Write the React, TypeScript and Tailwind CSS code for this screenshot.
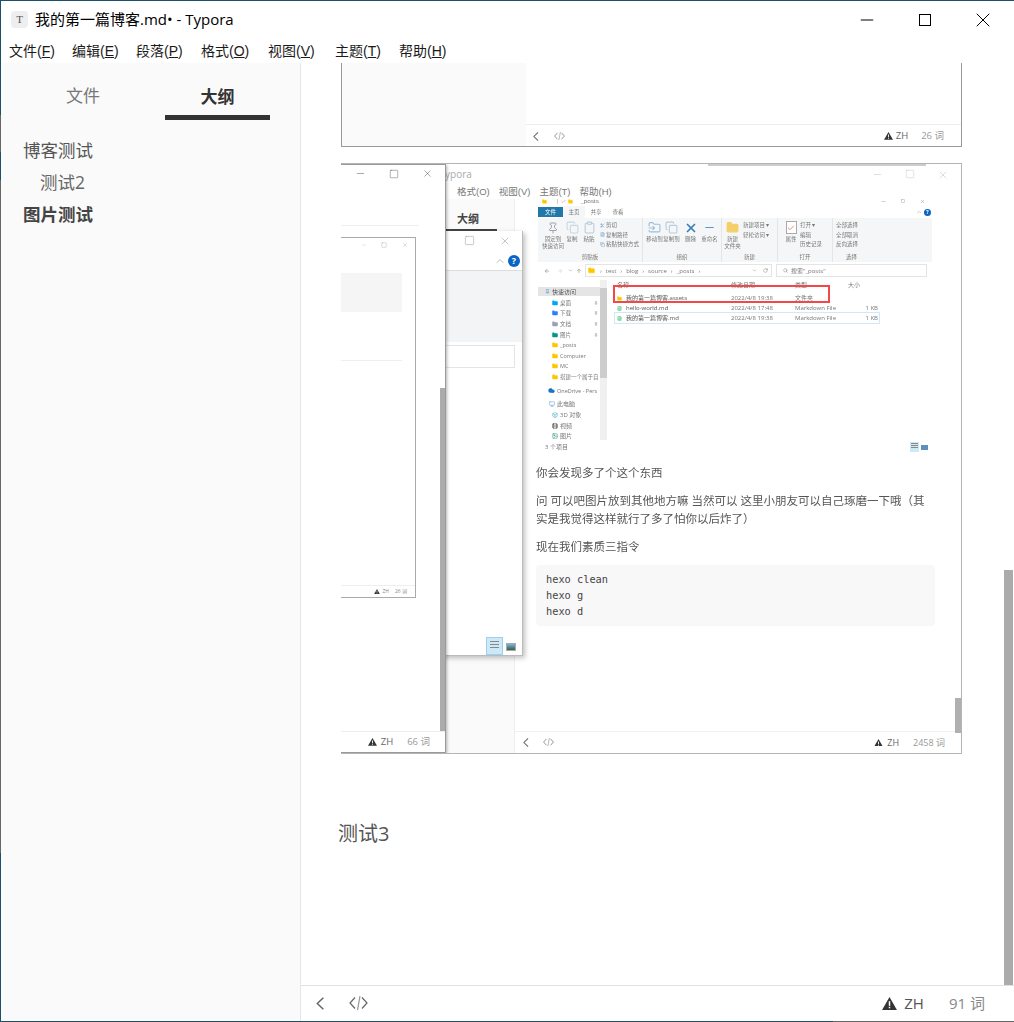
import React from 'react';
import { Minus, Square, X, ChevronUp, ChevronDown, ArrowLeft, ArrowRight, ArrowUp, RotateCw, Search, Pin, Folder, FileText, Check, Monitor, Image, Scissors, Copy, Cloud, FolderInput, Clipboard, Box, Film } from 'lucide-react';

const ui = "font-['Open_Sans','Noto_Sans_CJK_SC',sans-serif]";

const Warn = ({ w }: { w: number }) => (
  <svg width={w} height={w * 0.87} viewBox="0 0 16 14" className="shrink-0">
    <path d="M8 0 16 14H0Z" fill="#333" />
    <rect x="7.2" y="4.500" width="1.6" height="5" fill="#fff" />
    <rect x="7.2" y="10.500" width="1.6" height="1.6" fill="#fff" />
  </svg>
);

const Back = ({ h, color = '#666' }: { h: number; color?: string }) => (
  <svg width={h * 0.62} height={h} viewBox="0 0 8 13" fill="none" stroke={color} strokeWidth="1.5" className="shrink-0">
    <path d="M7.300 .7 1.300 6.500l6 5.800" />
  </svg>
);

const Code = ({ w, color = '#666' }: { w: number; color?: string }) => (
  <svg width={w} height={w * 0.74} viewBox="0 0 19 14" fill="none" stroke={color} strokeWidth="1.2" className="shrink-0">
    <path d="M6 1.500 1 7l5 5.500M13 1.500 18 7l-5 5.500" />
    <path d="M11 0 8.500 14" stroke="#999" />
  </svg>
);

const menus = [
  { label: '文件', key: 'F', w: 'w-[63px]' },
  { label: '编辑', key: 'E', w: 'w-[64px]' },
  { label: '段落', key: 'P', w: 'w-[65px]' },
  { label: '格式', key: 'O', w: 'w-[67px]' },
  { label: '视图', key: 'V', w: 'w-[67px]' },
  { label: '主题', key: 'T', w: 'w-[64px]' },
  { label: '帮助', key: 'H', w: 'w-[64px]' },
];

const navItems = [
  { label: '桌面', color: 'text-sky-500', pin: true },
  { label: '下载', color: 'text-blue-500', pin: true },
  { label: '文档', color: 'text-gray-400', pin: true },
  { label: '图片', color: 'text-teal-600', pin: true },
  { label: '_posts', color: 'text-yellow-400', pin: false },
  { label: 'Computer', color: 'text-yellow-400', pin: false },
  { label: 'MC', color: 'text-yellow-400', pin: false },
  { label: '搭建一个属于自', color: 'text-yellow-400', pin: false },
];

const files = [
  { name: '我的第一篇博客.assets', date: '2022/4/8 19:38', type: '文件夹', size: '', dir: true, selected: false },
  { name: 'hello-world.md', date: '2022/4/8 17:48', type: 'Markdown File', size: '1 KB', dir: false, selected: false },
  { name: '我的第一篇博客.md', date: '2022/4/8 19:38', type: 'Markdown File', size: '1 KB', dir: false, selected: true },
];

const Tool = ({ icon, lines, w }: { icon: React.ReactNode; lines: string[]; w: string }) => (
  <div className={`${w} flex flex-col items-center shrink-0`}>
    <div className="h-[15px] flex items-center">{icon}</div>
    {lines.map((l) => <span key={l} className="mt-[1px] whitespace-nowrap">{l}</span>)}
  </div>
);

function Explorer() {
  return (
    <div className="relative w-[394px] h-[256px] flex flex-col text-[6px] leading-[8px] text-[#777]">
      <div className="flex flex-col h-full blur-[0.4px]">
        <div className="flex items-center h-[10px] pl-[4px] shrink-0">
          <Folder size={5} className="text-yellow-400" fill="currentColor" />
          <span className="ml-[10px] w-px h-[5px] bg-[#ccc]" />
          <Check size={5} className="ml-[3px] text-[#c55]" />
          <Folder size={5} className="ml-[2px] text-yellow-400" fill="currentColor" />
          <span className="ml-[8px] text-[#666]">_posts</span>
          <div className="ml-auto flex gap-[15px] pr-[7px] text-[#888]">
            <Minus size={5} /><Square size={4} /><X size={5} />
          </div>
        </div>
        <div className="flex items-center h-[12px] shrink-0 text-[5.5px]">
          <span className="bg-[#1f78a8] text-white w-[25px] h-[10px] flex items-center justify-center">文件</span>
          <span className="bg-[#f5f6f7] w-[22px] h-[12px] flex items-center justify-center">主页</span>
          <span className="w-[22px] text-center">共享</span>
          <span className="w-[22px] text-center">查看</span>
          <div className="ml-auto flex items-center gap-[2px] pr-[1px]">
            <ChevronUp size={6} className="text-[#999]" />
            <span className="w-[7px] h-[7px] rounded-full bg-[#0a63c5] text-white text-[5px] leading-[7px] text-center font-bold">?</span>
          </div>
        </div>
        <div className="flex h-[44px] shrink-0 bg-[#f5f6f7] text-[5.5px] leading-[6px]">
          <div className="w-[105px] relative flex pl-[4px] pt-[2px] border-r border-[#e3e5e7]">
            <Tool w="w-[22px]" icon={<Pin size={12} className="text-[#9aa4ad]" />} lines={['固定到', '快速访问']} />
            <Tool w="w-[16px]" icon={<Copy size={13} className="text-[#c7d6e4]" />} lines={['复制']} />
            <Tool w="w-[18px]" icon={<Clipboard size={13} className="text-[#b9cbdc]" />} lines={['粘贴']} />
            <div className="flex flex-col gap-[3.500px] pt-[2px] pl-[2px] whitespace-nowrap">
              <span className="flex gap-[1px] items-center"><Scissors size={5} className="text-[#5e94c4]" />剪切</span>
              <span className="flex gap-[1px] items-center"><FileText size={5} className="text-[#5e94c4]" />复制路径</span>
              <span className="flex gap-[1px] items-center"><Copy size={5} className="text-[#5e94c4]" />粘贴快捷方式</span>
            </div>
            <span className="absolute bottom-[2px] inset-x-0 text-center">剪贴板</span>
          </div>
          <div className="w-[79px] relative flex pl-[3px] pt-[2px] border-r border-[#e3e5e7]">
            <Tool w="w-[17px]" icon={<FolderInput size={13} className="text-[#9dbddc]" />} lines={['移动到']} />
            <Tool w="w-[17px]" icon={<Copy size={13} className="text-[#b9cbdc]" />} lines={['复制到']} />
            <Tool w="w-[21px]" icon={<X size={14} strokeWidth={3} className="text-[#3c7fb8]" />} lines={['删除']} />
            <Tool w="w-[17px]" icon={<Minus size={13} className="text-[#5e94c4]" />} lines={['重命名']} />
            <span className="absolute bottom-[2px] inset-x-0 text-center">组织</span>
          </div>
          <div className="w-[56px] relative flex pt-[2px] border-r border-[#e3e5e7]">
            <Tool w="w-[21px]" icon={<Folder size={13} className="text-[#f4cf68]" fill="currentColor" />} lines={['新建', '文件夹']} />
            <div className="flex flex-col gap-[3.500px] pt-[2px] whitespace-nowrap"><span>新建项目 ▾</span><span>轻松访问 ▾</span></div>
            <span className="absolute bottom-[2px] inset-x-0 text-center">新建</span>
          </div>
          <div className="w-[55px] relative flex pl-[4px] pt-[2px] border-r border-[#e3e5e7]">
            <Tool w="w-[18px]" icon={<div className="w-[11px] h-[13px] border border-[#aaa] bg-white flex items-center justify-center"><Check size={8} className="text-[#e0562d]" /></div>} lines={['属性']} />
            <div className="flex flex-col gap-[3.500px] pt-[2px] whitespace-nowrap"><span>打开 ▾</span><span>编辑</span><span>历史记录</span></div>
            <span className="absolute bottom-[2px] inset-x-0 text-center">打开</span>
          </div>
          <div className="w-[37px] relative flex flex-col gap-[3.500px] pl-[3px] pt-[4px] whitespace-nowrap">
            <span>全部选择</span><span>全部取消</span><span>反向选择</span>
            <span className="absolute bottom-[2px] inset-x-0 text-center">选择</span>
          </div>
        </div>
        <div className="flex items-center h-[13px] mt-[2px] shrink-0 pl-[6px] pr-[5px]">
          <ArrowLeft size={6} />
          <ArrowRight size={6} className="ml-[7px] text-[#ccc]" />
          <ChevronDown size={5} className="ml-[5px]" />
          <ArrowUp size={6} className="ml-[3px]" />
          <div className="ml-[3px] flex-1 h-full border border-[#e4e4e4] flex items-center pl-[2px] pr-[3px]">
            <Folder size={7} className="text-yellow-400" fill="currentColor" />
            <span className="ml-[5px]">›</span><span className="ml-[4px]">test</span>
            <span className="ml-[4px]">›</span><span className="ml-[4px]">blog</span>
            <span className="ml-[4px]">›</span><span className="ml-[4px]">source</span>
            <span className="ml-[4px]">›</span><span className="ml-[4px]">_posts</span>
            <span className="ml-[4px]">›</span>
            <ChevronDown size={5} className="ml-auto" />
            <RotateCw size={5} className="ml-[6px]" />
          </div>
          <div className="w-[151px] ml-[4px] h-full border border-[#e4e4e4] flex items-center gap-[3px] pl-[6px]">
            <Search size={5} /><span>搜索"_posts"</span>
          </div>
        </div>
        <div className="flex h-[162px] mt-[3px] shrink-0">
          <div className="w-[62px] shrink-0 pt-[7px] flex flex-col gap-[2.650px]">
            <div className="bg-[#e5e5e5] h-[9px] pl-[7px] flex items-center gap-[2px] text-[#555] shrink-0">
              <Pin size={5} className="text-[#3c82c4]" />快速访问
            </div>
            {navItems.map((n) => (
              <div key={n.label} className="pl-[14px] h-[8px] flex items-center gap-[2px] whitespace-nowrap text-[5.500px] shrink-0">
                <Folder size={6} className={`${n.color} shrink-0`} fill="currentColor" />
                <span className="grow">{n.label}</span>
                {n.pin && <Pin size={4} className="mr-[2px]" />}
              </div>
            ))}
            <div className="pl-[10px] h-[8px] mt-[3px] flex items-center gap-[2px] whitespace-nowrap text-[5.500px] shrink-0"><Cloud size={7} className="text-[#1a74c7] shrink-0" fill="currentColor" />OneDrive - Pers</div>
            <div className="pl-[11px] h-[8px] mt-[3px] flex items-center gap-[2px] shrink-0"><Monitor size={6} className="text-[#5b9bd5]" />此电脑</div>
            <div className="pl-[14px] h-[8px] flex items-center gap-[2px] shrink-0"><Box size={6} className="text-[#2ba7c9]" />3D 对象</div>
            <div className="pl-[14px] h-[8px] flex items-center gap-[2px] shrink-0"><Film size={6} className="text-[#444]" />视频</div>
            <div className="pl-[14px] h-[8px] flex items-center gap-[2px] shrink-0"><Image size={6} className="text-[#2d8a7b]" />图片</div>
          </div>
          <div className="w-[7px] h-[160px] shrink-0 bg-[#f0f0f0] flex flex-col">
            <div className="bg-[#cdcdcd] h-[90px] mt-[8px]" />
          </div>
          <div className="w-[264px] ml-[8px]">
            <div className="flex h-[10px] items-center">
              <span className="w-[116px] pl-[2px]">名称</span>
              <span className="w-[64px]">修改日期</span>
              <span className="w-[53px]">类型</span>
              <span>大小</span>
            </div>
            <div className="mt-[3px]">
              {files.map((f) => (
                <div key={f.name} className={`flex h-[10px] items-center whitespace-nowrap ${f.selected ? 'outline outline-[#cfe8fa]' : ''}`}>
                  <span className="w-[116px] flex items-center gap-[4px] pl-[2px]">
                    {f.dir ? <Folder size={5} className="text-yellow-400" fill="currentColor" /> : <FileText size={5} className="text-green-600" />}
                    <span className="text-[#555]">{f.name}</span>
                  </span>
                  <span className="w-[64px]">{f.date}</span>
                  <span className="w-[53px]">{f.type}</span>
                  <span className="w-[31px] text-right pr-[1px]">{f.size}</span>
                </div>
              ))}
            </div>
          </div>
        </div>
        <div className="h-[10px] pl-[7px] pr-[4px] flex items-center">
          <span>3 个项目</span>
          <div className="ml-auto w-[9px] h-[10px] bg-[#cde8f7] flex flex-col gap-[1px] p-[1px]">
            <div className="h-px bg-[#888]" /><div className="h-px bg-[#888]" /><div className="h-px bg-[#888]" />
          </div>
          <div className="ml-[2px] w-[7px] h-[5px] bg-[#5f8fbd]" />
        </div>
      </div>
      <div className="absolute left-[75px] top-[89px] w-[217px] h-[18px] border-2 border-[#f44848]" />
    </div>
  );
}

function Shot() {
  return (
    <div className="relative w-[621px] h-[591px] mt-[16px] border-y border-r border-[#b4b4b4] bg-white overflow-hidden">
      {/* back window: the article */}
      <div className="absolute left-[174px] top-0 right-0 bottom-0 bg-white">
        <div className="absolute right-[12px] top-[5px] flex gap-[22px] text-[#bbb]"><Minus size={11} strokeWidth={1} /><Square size={10} strokeWidth={1} /><X size={12} strokeWidth={1} /></div>
        <div className="absolute left-[-71px] top-[35px] bottom-0 w-[71px] bg-[#fafafa] border-r border-[#eee]" />
        <div className="absolute left-[-70px] top-[3px] text-[10px] leading-[14px] text-[#aaa]">ypora</div>
        <div className="absolute left-[-58px] top-[21px] flex gap-[9px] text-[9.500px] leading-[14px] text-[#777] whitespace-nowrap font-['Liberation_Sans','Noto_Sans_CJK_SC',sans-serif]">
          <span>格式(O)</span><span>视图(V)</span><span>主题(T)</span><span>帮助(H)</span>
        </div>
        <div className="absolute left-[-58px] top-[47px] text-[11px] leading-[16px] font-bold text-[#444]">大纲</div>
        <div className="absolute left-[-70px] top-[65px] w-[52px] h-[2px] bg-[#444]" />
        <div className="absolute left-[23px] top-[32px]"><Explorer /></div>
        <div className="absolute left-[21px] top-[299px] w-[399px] text-[#555] text-[11.500px] leading-[18px]">
          <p className="blur-[0.3px] mt-[1px]">你会发现多了个这个东西</p>
          <p className="mt-[10px] blur-[0.3px] w-[392px]">问 可以吧图片放到其他地方嘛 当然可以 这里小朋友可以自己琢磨一下哦（其实是我觉得这样就行了多了怕你以后炸了）</p>
          <p className="mt-[10px] blur-[0.3px]">现在我们素质三指令</p>
          <pre className="mt-[9px] bg-[#f8f8f8] rounded-sm px-[10px] pt-[6px] font-['DejaVu_Sans_Mono',monospace] text-[10.300px] leading-[16px] h-[61px] text-[#444]">{'hexo clean\nhexo g\nhexo d'}</pre>
        </div>
        <div className="absolute left-0 right-0 bottom-0 h-[22px] border-t border-[#f0f0f0] flex items-center pl-[8px] pr-[16px] text-[9px] text-[#666] bg-white">
          <Back h={9} />
          <div className="ml-[14px]"><Code w={11} /></div>
          <div className="ml-auto flex items-center">
            <Warn w={9} /><span className="ml-[4px]">ZH</span><span className="ml-[14px] text-[#999]">2458 词</span>
          </div>
        </div>
        <div className="absolute right-0 top-[534px] w-[6px] h-[35px] bg-[#b0b0b0]" />
      </div>
      {/* window floating over the article */}
      <div className="absolute left-0 top-[67px] w-[182px] h-[425px] bg-white border-b border-r border-[#bbb] shadow-[2px_2px_5px_rgba(0,0,0,0.25)]">
        <Square size={11} strokeWidth={1} className="absolute right-[47px] top-[4px] text-[#888]" />
        <X size={12} strokeWidth={1} className="absolute right-[11px] top-[4px] text-[#888]" />
        <ChevronUp size={12} className="absolute right-[16px] top-[24px] text-[#bbb]" />
        <div className="absolute right-[2px] top-[24px] w-[12px] h-[12px] rounded-full bg-[#0a63c5] text-white text-[9px] leading-[12px] text-center font-bold">?</div>
        <div className="absolute inset-x-0 top-[39px] h-[72px] bg-[#f3f4f5] border-t border-[#ddd]" />
        <div className="absolute left-0 right-[7px] top-[114px] h-[23px] border border-[#e4e4e4]" />
        <div className="absolute right-[19px] bottom-0 w-[17px] h-[18px] bg-[#cde8f7] border border-[#99d1ef] flex flex-col gap-[2px] p-[3px]">
          <div className="h-px bg-[#888]" /><div className="h-px bg-[#888]" /><div className="h-px bg-[#888]" />
        </div>
        <div className="absolute right-[6px] bottom-[4px] w-[10px] h-[8px] bg-gradient-to-b from-[#7fb3e0] to-[#35604a] border border-[#aaa]" />
      </div>
      {/* front window */}
      <div className="absolute left-0 top-0 w-[105px] h-[589px] bg-white border-t border-r border-b border-[#9a9a9a] shadow-[1px_1px_3px_rgba(0,0,0,0.3)]">
        <Minus size={11} strokeWidth={1} className="absolute left-[14px] top-[3px] text-[#444]" />
        <Square size={10} strokeWidth={1} className="absolute left-[48px] top-[4px] text-[#444]" />
        <X size={11} strokeWidth={1} className="absolute left-[81px] top-[3px] text-[#444]" />
        <div className="absolute left-0 right-[26px] top-[60px] h-px bg-[#eee]" />
        <div className="absolute left-0 top-[72px] w-[75px] h-[361px] border-t border-r border-b border-[#aaa] bg-white">
          <Minus size={6} strokeWidth={1} className="absolute left-[20px] top-[4px] text-[#999]" />
          <Square size={6} strokeWidth={1} className="absolute left-[40px] top-[4px] text-[#777]" />
          <X size={6} strokeWidth={1} className="absolute left-[61px] top-[4px] text-[#777]" />
          <div className="absolute left-0 right-[13px] top-[35px] h-[39px] bg-[#f5f5f5]" />
          <div className="absolute left-0 right-[13px] top-[122px] h-px bg-[#eee]" />
          <div className="absolute left-0 right-0 bottom-0 h-[12px] border-t border-[#eee] flex items-center justify-end pr-[8px] text-[5px] text-[#888]"><Warn w={6} /><span className="ml-[2px]">ZH</span><span className="ml-[6px]">26 词</span></div>
        </div>
        <div className="absolute right-0 top-[223px] w-[5px] h-[343px] bg-[#ababab]" />
        <div className="absolute inset-x-0 bottom-0 h-[21px] bg-white border-t border-[#eee] flex items-center justify-end pr-[15px] text-[9.500px] text-[#666]"><Warn w={9} /><span className="ml-[4px]">ZH</span><span className="ml-[14px] text-[#999]">66 词</span></div>
      </div>
      <div className="absolute top-0 left-[367px] w-[218px] h-[2px] bg-[#ccc]" />
    </div>
  );
}

export default function App() {
  return (
    <div className={`${ui} relative w-[1014px] h-[1022px] flex flex-col overflow-hidden bg-white pl-px pt-px pb-px text-[#333]`}>
      {/* window frame, partly hidden by the window behind */}
      <div className="absolute left-0 right-0 top-0 h-px bg-[#1a5068]" />
      <div className="absolute left-0 top-0 bottom-0 w-px bg-[#1a5068]" />
      <div className="absolute left-0 top-[115px] w-px h-[37px] bg-[#666]" />
      <div className="absolute left-0 top-[180px] w-px h-[673px] bg-[#666]" />
      <div className="absolute left-0 right-0 bottom-0 h-px bg-[#666]" />
      <div className="absolute left-0 w-[833px] bottom-0 h-px bg-[#1a5068]" />

      <div className="h-[38px] shrink-0 flex items-center pl-[10px] pb-[1px] bg-white">
        <div className="w-[17px] h-[17px] bg-[#eee] rounded-sm flex items-center justify-center font-['Liberation_Serif',serif] text-[11px] text-[#555] mr-[7px]">T</div>
        <span className="text-[15px] text-black">我的第一篇博客.md• - Typora</span>
        <div className="ml-auto flex h-full items-center text-black">
          <div className="w-[58px] flex justify-center"><Minus size={20} strokeWidth={1.2} /></div>
          <div className="w-[58px] flex justify-center"><div className="w-[12px] h-[12px] border border-black" /></div>
          <div className="w-[60px] flex justify-center pr-[2px]"><X size={24} strokeWidth={1} /></div>
        </div>
      </div>
      <div className="h-[24px] shrink-0 flex items-center pl-[8px] text-[14px] text-[#1a1a1a] font-['Liberation_Sans','Noto_Sans_CJK_SC',sans-serif]">
        {menus.map((m) => (
          <span key={m.key} className={`${m.w} shrink-0`}>{m.label}(<span className="underline">{m.key}</span>)</span>
        ))}
      </div>
      <div className="flex-1 flex min-h-0">
        <aside className="w-[300px] shrink-0 bg-[#fafafa] border-r border-[#e6e6e6] flex flex-col">
          <div className="flex h-[57px] pl-[27px] text-[17px]">
            <div className="w-[110px] flex items-start justify-center pt-[20px] leading-[26px] text-[#777]">文件</div>
            <div className="w-[105px] ml-[27px] flex items-start justify-center pt-[21px] leading-[26px] font-bold text-[#333] border-b-[5px] border-[#333]">大纲</div>
          </div>
          <div className="pl-[22px] pt-[14px] text-[17.500px] text-[#555] flex flex-col">
            <div className="h-[32px] leading-[32px]">博客测试</div>
            <div className="h-[32px] leading-[32px] pl-[17px] text-[#666]">测试2</div>
            <div className="h-[32px] leading-[32px] font-bold text-[#444]">图片测试</div>
          </div>
        </aside>
        <main className="flex-1 flex flex-col min-w-0">
          <div className="flex-1 flex min-h-0 relative">
            <div className="w-[622px] ml-[40px] flex flex-col">
              <div className="h-[84px] w-[621px] shrink-0 border-l border-b border-r border-[#999] flex">
                <div className="w-[184px] bg-[#fafafa]" />
                <div className="flex-1 flex flex-col justify-end">
                  <div className="h-[22px] border-t border-[#eee] flex items-center pl-[7px] pr-[17px] pt-[1px] text-[9.500px] text-[#666]">
                    <Back h={9} />
                    <div className="ml-[15px]"><Code w={11} /></div>
                    <div className="ml-auto flex items-center"><Warn w={9} /><span className="ml-[3px]">ZH</span><span className="ml-[13px] text-[#999]">26 词</span></div>
                  </div>
                </div>
              </div>
              <Shot />
              <div className="mt-[65px] -ml-[3px] text-[20px] text-[#555]">测试3</div>
            </div>
            <div className="absolute right-[1px] top-[507px] bottom-0 w-[9px] bg-[#ababab]" />
          </div>
          <div className="h-[36px] shrink-0 border-t border-[#e0e0e0] flex items-center pl-[15px] pr-[29px] text-[#666]">
            <Back h={13} />
            <div className="ml-[25px]"><Code w={19} /></div>
            <div className="ml-auto flex items-center text-[15px]">
              <Warn w={15} />
              <span className="ml-[7px] text-[#555]">ZH</span>
              <span className="ml-[25px] text-[#888]">91 词</span>
            </div>
          </div>
        </main>
      </div>
    </div>
  );
}
